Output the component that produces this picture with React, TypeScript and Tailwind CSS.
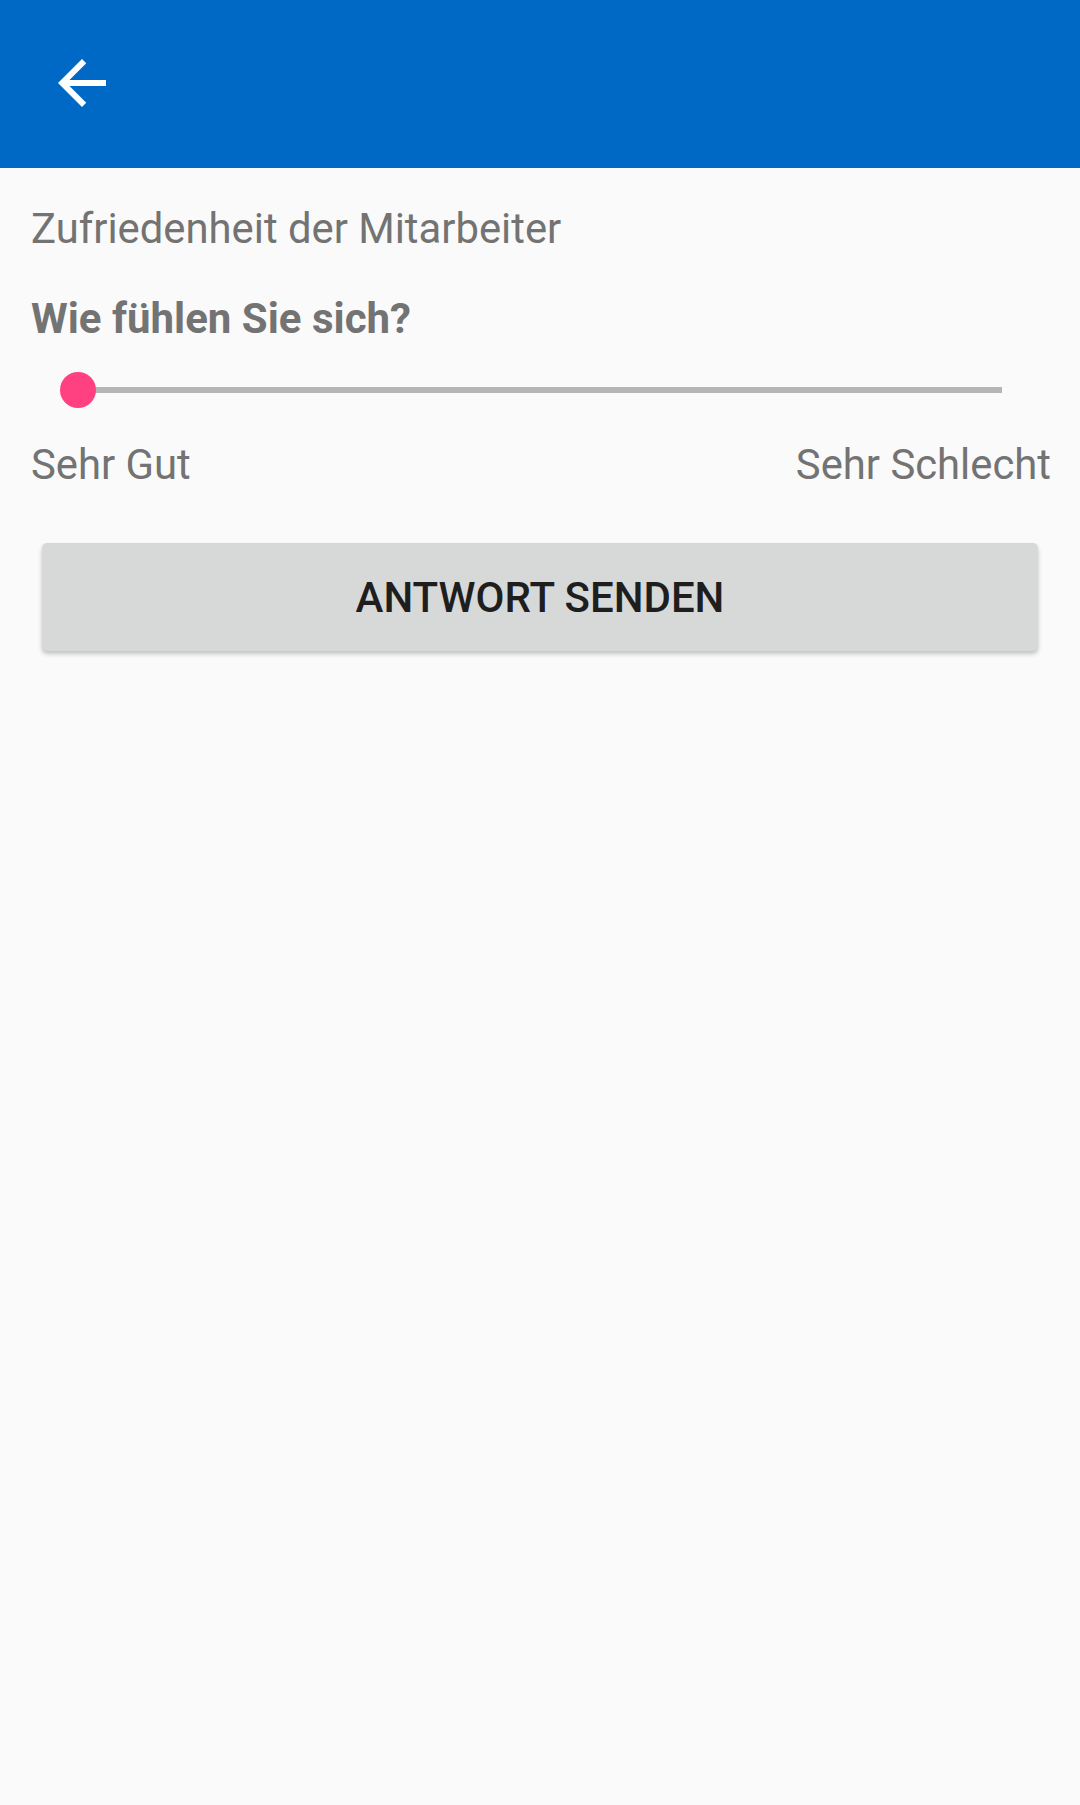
import { useState } from 'react';

export default function App() {
  const [value] = useState(0);

  return (
    <div className="min-h-[1805px] w-full bg-[#fafafa] font-['Roboto',_'Noto_Sans',_sans-serif]">
      {/* App bar */}
      <header className="h-[168px] bg-[#0069c6] flex items-center">
        <button className="ml-[46px] mt-[-2px] w-[72px] h-[72px] flex items-center justify-center" aria-label="Zurück">
          <svg viewBox="0 0 24 24" width="72" height="72" fill="#ffffff">
            <path d="M20 11H7.83l5.59-5.59L12 4l-8 8 8 8 1.41-1.41L7.83 13H20v-2z" />
          </svg>
        </button>
      </header>

      <main className="pl-[31px] pr-[29px]">
        <h1 className="mt-[36px] text-[41.8px] leading-[50px] font-normal text-[#737373]">
          Zufriedenheit der Mitarbeiter
        </h1>
        <h2 className="mt-[40px] text-[42px] leading-[50px] font-bold text-[#737373]">
          Wie fühlen Sie sich?
        </h2>

        {/* Seek bar */}
        <div className="mt-[28px] ml-[29px] relative h-[36px] w-[942px]">
          <div className="absolute left-[18px] right-0 top-[15px] h-[6px] bg-[#b6b6b6]" />
          <div
            className="absolute top-0 w-[36px] h-[36px] rounded-full bg-[#ff4081]"
            style={{ left: `${value}%` }}
          />
        </div>

        <div className="mt-[32px] flex justify-between text-[41.8px] leading-[50px] text-[#737373]">
          <span>Sehr Gut</span>
          <span>Sehr Schlecht</span>
        </div>

        <div className="mt-[53px] pl-[11px] pr-[13px]">
          <button className="w-full h-[108px] rounded-[5px] bg-[#d7d8d8] shadow-[0_3px_4px_rgba(0,0,0,0.22)] text-[42px] font-medium text-[#1e1e1e]">
            ANTWORT SENDEN
          </button>
        </div>
      </main>
    </div>
  );
}
